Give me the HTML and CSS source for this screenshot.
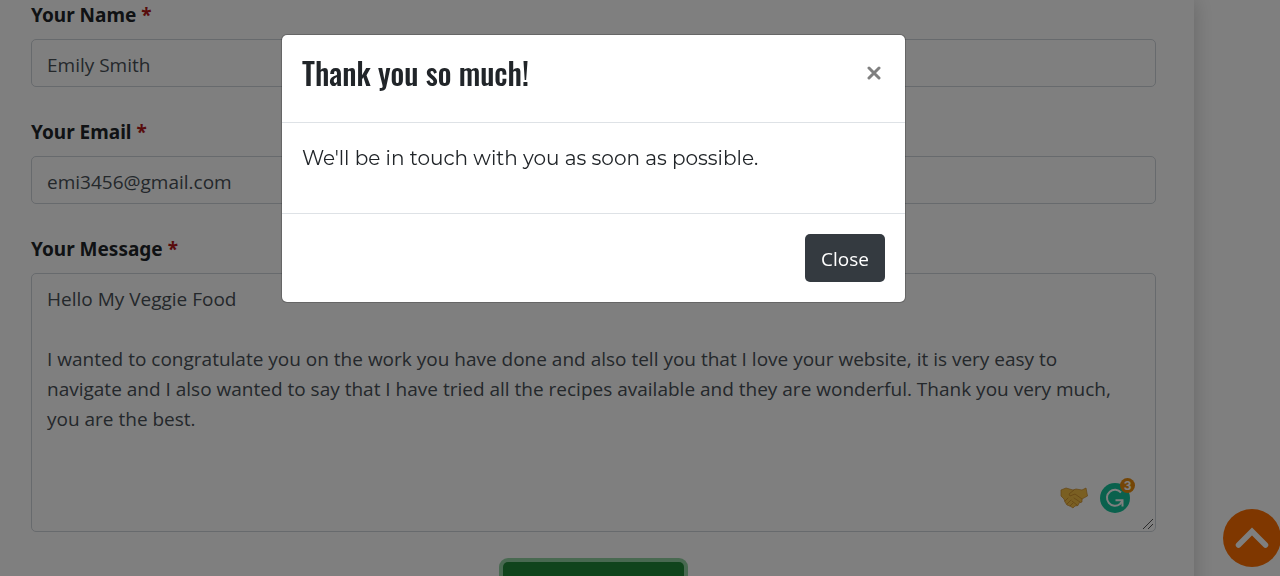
FILE: index.html
```html
<!DOCTYPE html>
<html lang="en">
<head>
<meta charset="utf-8">
<meta name="viewport" content="width=device-width, initial-scale=1">
<title>My Veggie Food - Contact</title>
<link rel="stylesheet" href="styles.css">
</head>
<body>
<main class="page">
  <form class="contact-form">
    <div class="field">
      <label class="field-label" for="name">Your Name <span class="required">*</span></label>
      <input class="control" id="name" type="text" value="Emily Smith">
    </div>
    <div class="field">
      <label class="field-label" for="email">Your Email <span class="required">*</span></label>
      <input class="control" id="email" type="email" value="emi3456@gmail.com">
    </div>
    <div class="field">
      <label class="field-label" for="message">Your Message <span class="required">*</span></label>
      <div class="message-box">
        <textarea class="control message" id="message" spellcheck="false">Hello My Veggie Food

I wanted to congratulate you on the work you have done and also tell you that I love your website, it is very easy to navigate and I also wanted to say that I have tried all the recipes available and they are wonderful. Thank you very much, you are the best.</textarea>
        <div class="assistant">
          <svg class="handshake" viewBox="0 0 28 24" aria-hidden="true">
            <path d="M1 4 6 2 13 4 16 3 22 4 26 2 27.500 10 22 13 22 16 19 17 18 19.500 15 20 13 22 10 20 7 19 5 16 4 13 1 10Z" fill="#f5bf45" stroke="#c98a2a" stroke-width=".7" stroke-linejoin="round"/>
            <path d="M14 4 9 8 10 10 15 8 22 13M14 12 20 16M12 15 17 19M5 15 8 12M7 18 11 14M10 20 13 17" fill="none" stroke="#c98a2a" stroke-width=".8" stroke-linecap="round" stroke-linejoin="round"/>
          </svg>
          <div class="grammar">
            <svg class="grammar-logo" viewBox="0 0 30 30" aria-hidden="true">
              <circle cx="15" cy="15" r="15" fill="#15c39a"/>
              <path d="M21 9.500A8 8 0 1 0 20 21L22.500 18" fill="none" stroke="#fff" stroke-width="2"/>
              <path d="M15.500 17.200H22.500V23.500" fill="none" stroke="#fff" stroke-width="2"/>
            </svg>
            <span class="grammar-count">3</span>
          </div>
        </div>
        <svg class="grip" viewBox="0 0 12 12" aria-hidden="true"><path d="M1 11 11 1M6 11 11 6" stroke="#555" stroke-width="1"/></svg>
      </div>
    </div>
    <button class="send" type="submit" aria-label="Send message"></button>
  </form>
</main>
<a class="to-top" href="#" aria-label="Back to top">
  <svg class="to-top-icon" viewBox="0 0 34 22" aria-hidden="true"><path d="M3.500 18 17 4.500 30.500 18" fill="none" stroke="#fff" stroke-width="5.500" stroke-linecap="round" stroke-linejoin="miter"/></svg>
</a>
<div class="backdrop">
  <section class="modal" role="dialog" aria-modal="true" aria-labelledby="modal-title">
    <header class="modal-header">
      <h2 class="modal-title" id="modal-title">Thank you so much!</h2>
      <button class="dismiss" type="button" aria-label="Dismiss">
        <svg class="dismiss-icon" viewBox="0 0 14 14" aria-hidden="true"><path d="M2 2 12 12M12 2 2 12" stroke="#808080" stroke-width="3" stroke-linecap="round"/></svg>
      </button>
    </header>
    <div class="modal-body"><p class="modal-text">We'll be in touch with you as soon as possible.</p></div>
    <footer class="modal-footer"><button class="close" type="button">Close</button></footer>
  </section>
</div>
</body>
</html>
```

FILE: styles.css
```css
* {
  box-sizing: border-box;
}

body {
  margin: 0;
  height: 100vh;
  overflow: hidden;
  background: #fff;
  color: #212529;
  font: 19px/30px "Noto Sans", "Open Sans", sans-serif;
}

.page {
  margin-right: 86px;
  padding: 0 38px 0 31px;
  background: #fff;
  box-shadow: 0 0 20px rgba(0, 0, 0, 0.2);
}

.contact-form {
  display: flex;
  flex-direction: column;
  gap: 30px;
}

.field {
  display: flex;
  flex-direction: column;
  gap: 9px;
}

.field-label {
  font-weight: 700;
}

.required {
  color: #b01818;
}

.control {
  display: block;
  width: 100%;
  height: 48px;
  padding: 10px 15px 6px;
  border: 1px solid #ced4da;
  border-radius: 5px;
  background: #fff;
  color: #495057;
  font: 19px/30px "Open Sans", "Noto Sans", sans-serif;
}

.message-box {
  position: relative;
}

.message {
  height: 259px;
  padding-right: 28px;
  resize: none;
}

.assistant {
  position: absolute;
  right: 26px;
  bottom: 19px;
  display: flex;
  align-items: center;
  gap: 12px;
}

.handshake {
  width: 28px;
  height: 24px;
}

.grammar {
  position: relative;
  height: 30px;
}

.grammar-logo {
  display: block;
  width: 30px;
  height: 30px;
}

.grammar-count {
  position: absolute;
  top: -5px;
  right: -5px;
  width: 15px;
  height: 15px;
  border-radius: 50%;
  background: #e98b0c;
  color: #fff;
  font: 700 12px/15px Inter, sans-serif;
  text-align: center;
}

.grip {
  position: absolute;
  right: 2px;
  bottom: 2px;
  width: 12px;
  height: 12px;
}

.send {
  align-self: center;
  width: 181px;
  height: 48px;
  border: 0;
  border-radius: 5px;
  background: #218838;
  box-shadow: 0 0 0 4px rgba(40, 167, 69, 0.5);
}

.to-top {
  position: fixed;
  right: -1px;
  bottom: 9px;
  display: flex;
  align-items: center;
  justify-content: center;
  width: 58px;
  height: 58px;
  border-radius: 50%;
  background: #ff6f00;
}

.to-top-icon {
  width: 34px;
  height: 22px;
}

.backdrop {
  position: fixed;
  inset: 0;
  display: flex;
  align-items: flex-start;
  justify-content: center;
  padding: 34px 93px 34px 0;
  background: rgba(0, 0, 0, 0.5);
}

.modal {
  width: 625px;
  border: 1px solid rgba(0, 0, 0, 0.2);
  border-radius: 6px;
  background: #fff;
  background-clip: padding-box;
}

.modal-header {
  display: flex;
  align-items: flex-start;
  justify-content: space-between;
  padding: 20px;
  border-bottom: 1px solid #dee2e6;
}

.modal-title {
  margin: 0;
  padding-bottom: 11px;
  font: 500 30px/36px Oswald, "Roboto Condensed", Roboto, sans-serif;
}

.dismiss {
  padding: 11px 4px;
  border: 0;
  background: none;
}

.dismiss-icon {
  display: block;
  width: 14px;
  height: 14px;
}

.modal-body {
  padding: 20px;
}

.modal-text {
  margin: 0 0 20px;
  font: 400 20px/30px Montserrat, Inter, sans-serif;
}

.modal-footer {
  display: flex;
  justify-content: flex-end;
  padding: 20px;
  border-top: 1px solid #dee2e6;
}

.close {
  padding: 10px 16px 8px;
  border: 0;
  border-radius: 5px;
  background: #343a40;
  color: #fff;
  font: 19px/30px "Open Sans", "Noto Sans", sans-serif;
}
```
